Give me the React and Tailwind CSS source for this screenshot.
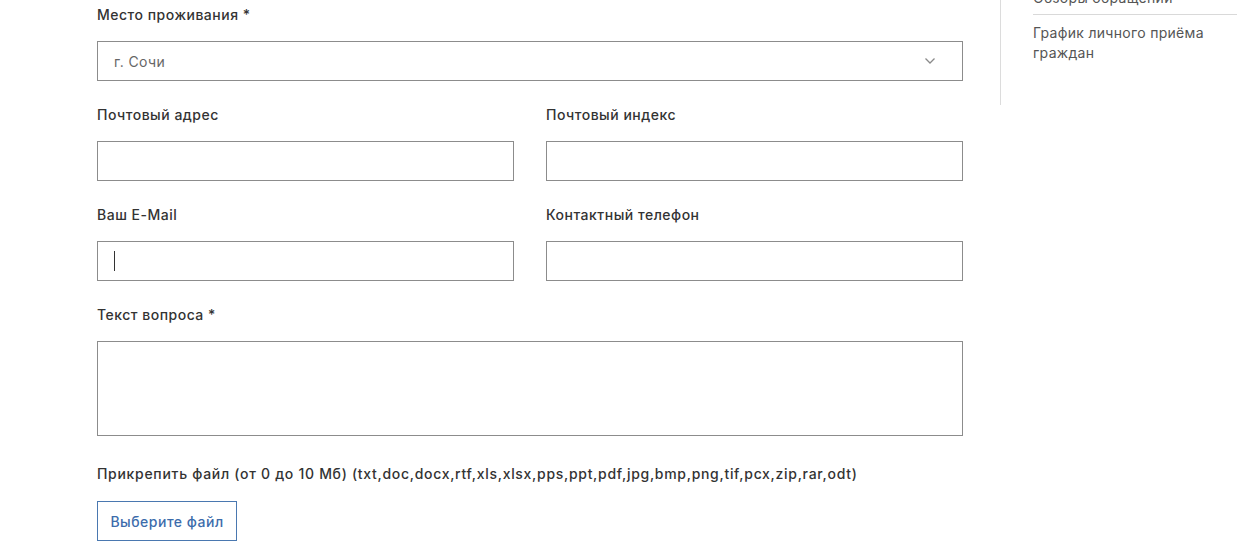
import React from 'react';

const font = { fontFamily: 'Inter, "Noto Sans", sans-serif' };

const Label = ({ children, className = '' }) => (
  <div className={`text-[14px] leading-5 font-medium text-[#333333] tracking-[0.5px] ${className}`}>{children}</div>
);

const Field = ({ children, className = '' }) => (
  <div className={`h-10 border border-[#8c8c8c] bg-white flex items-center px-4 ${className}`}>
    {children}
  </div>
);

const App = () => {
  return (
    <div className="min-h-[557px] bg-white flex pl-[97px]" style={font}>
      <form className="w-[866px] pt-[5px] flex flex-col">
        <Label>Место проживания *</Label>
        <Field className="mt-4 justify-between">
          <span className="text-[14px] text-[#666666] tracking-[0.4px]">г. Сочи</span>
          <svg width="12" height="8" viewBox="0 0 12 8" className="mr-[10px]">
            <path d="M1.5 1.5 6 6l4.5-4.5" fill="none" stroke="#8a8a8a" strokeWidth="1.3" />
          </svg>
        </Field>

        <div className="grid grid-cols-2 gap-x-8 mt-6">
          <div className="flex flex-col gap-4">
            <Label>Почтовый адрес</Label>
            <Field />
          </div>
          <div className="flex flex-col gap-4">
            <Label>Почтовый индекс</Label>
            <Field />
          </div>
        </div>

        <div className="grid grid-cols-2 gap-x-8 mt-6">
          <div className="flex flex-col gap-4">
            <Label>Ваш E-Mail</Label>
            <Field>
              <span className="w-px h-5 bg-[#333333]" />
            </Field>
          </div>
          <div className="flex flex-col gap-4">
            <Label>Контактный телефон</Label>
            <Field />
          </div>
        </div>

        <div className="mt-6 flex flex-col gap-4">
          <Label>Текст вопроса *</Label>
          <div className="h-[95px] border border-[#8c8c8c] bg-white" />
        </div>

        <div className="mt-7">
          <Label className="tracking-[0.7px]">Прикрепить файл (от 0 до 10 Мб) (txt,doc,docx,rtf,xls,xlsx,pps,ppt,pdf,jpg,bmp,png,tif,pcx,zip,rar,odt)</Label>
        </div>
        <div className="mt-[17px]">
          <button
            type="button"
            className="h-10 w-[140px] border border-[#4a78b0] text-[#3d6cab] text-[14px] font-medium tracking-[0.5px] bg-white"
          >
            Выберите файл
          </button>
        </div>
      </form>

      <div className="ml-[37px] h-[105px] border-l border-[#dcdcdc]" />

      <aside className="pl-8 w-[236px]">
        <div className="-mt-[12px] pb-[6px] text-[14px] leading-5 text-[#555555] tracking-[0.3px] border-b border-[#d9d9d9]">
          Обзоры обращений
        </div>
        <div className="pt-2 text-[14px] leading-5 text-[#555555] tracking-[0.3px] w-[200px]">
          График личного приёма граждан
        </div>
      </aside>
    </div>
  );
};

export default App;
